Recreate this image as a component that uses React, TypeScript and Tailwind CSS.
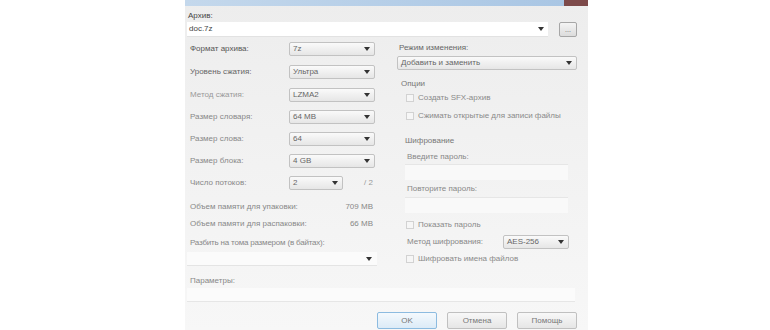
import React from 'react';

// ---------------------------------------------------------------------------
// Small building blocks
// ---------------------------------------------------------------------------

const font = "font-['Liberation_Sans',Arial,sans-serif]";

function Arrow() {
  return (
    <svg width="6" height="4" viewBox="0 0 6 4" className="shrink-0">
      <path d="M0 0h6L3 4z" fill="#333" />
    </svg>
  );
}

function Combo({ value, className = '' }: { value?: string; className?: string }) {
  return (
    <div
      className={`flex h-[14px] items-center justify-between rounded-[2px] border border-[#c2c2c2] bg-gradient-to-b from-[#fafafa] to-[#e6e6e6] pl-[3px] pr-[4px] ${className}`}
    >
      <span className="text-[8px] leading-none text-[#666]">{value}</span>
      <Arrow />
    </div>
  );
}

function Check({ label }: { label: string }) {
  return (
    <div className="flex h-[10px] items-center gap-[4px] pl-[9px]">
      <span className="h-[8px] w-[8px] border border-[#d2d2d2] bg-[#f6f6f6]" />
      <span className="text-[8px] leading-none text-[#8a8a8a]">{label}</span>
    </div>
  );
}

function Row({ label, children, tone = 'text-[#888]', mt }: { label: string; children: React.ReactNode; tone?: string; mt: string }) {
  return (
    <div className={`flex h-[14px] items-center ${mt}`}>
      <span className={`w-[102px] pl-[3px] text-[8px] leading-none ${tone}`}>{label}</span>
      {children}
    </div>
  );
}

// ---------------------------------------------------------------------------
// Dialog
// ---------------------------------------------------------------------------

export default function App() {
  return (
    <div className={`flex h-[330px] w-[770px] overflow-hidden bg-white ${font}`}>
      <div className="w-[185px] shrink-0" />

      <div className="flex w-[403px] shrink-0 flex-col bg-gradient-to-b from-[#ededed] via-[#f2f2f2] to-[#f7f7f7]">
        {/* Title bar remnant */}
        <div className="flex h-[6px]">
          <div className="flex-1 bg-gradient-to-r from-[#c4d8ec] to-[#a9c6e4]" />
          <div className="w-[24px] bg-[#7d4a4a]" />
        </div>

        {/* Archive name */}
        <div className="mt-[5px] h-[10px] pl-[3px] text-[8px] leading-[10px] text-[#444]">Архив:</div>
        <div className="mt-[1px] flex items-center pl-[2px]">
          <div className="flex h-[15px] w-[361px] items-center justify-between border-b border-[#e2e2e2] bg-white pl-[2px] pr-[4px]">
            <span className="text-[8px] leading-none text-[#444]">doc.7z</span>
            <Arrow />
          </div>
          <div className="ml-[11px] flex h-[15px] w-[18px] items-center justify-center rounded-[2px] border border-[#a6a6a6] bg-gradient-to-b from-[#f4f4f4] to-[#dcdcdc] text-[7px] leading-none text-[#666]">
            ...
          </div>
        </div>

        {/* Two columns */}
        <div className="mt-[5px] flex pl-[2px]">
          {/* Left column */}
          <div className="flex w-[190px] flex-col">
            <Row label="Формат архива:" tone="text-[#555]" mt="mt-0">
              <Combo value="7z" className="w-[86px]" />
            </Row>
            <Row label="Уровень сжатия:" tone="text-[#666]" mt="mt-[9px]">
              <Combo value="Ультра" className="w-[86px]" />
            </Row>
            <Row label="Метод сжатия:" tone="text-[#999]" mt="mt-[9px]">
              <Combo value="LZMA2" className="w-[86px]" />
            </Row>
            <Row label="Размер словаря:" mt="mt-[8px]">
              <Combo value="64 MB" className="w-[86px]" />
            </Row>
            <Row label="Размер слова:" mt="mt-[8px]">
              <Combo value="64" className="w-[86px]" />
            </Row>
            <Row label="Размер блока:" mt="mt-[8px]">
              <Combo value="4 GB" className="w-[86px]" />
            </Row>
            <Row label="Число потоков:" mt="mt-[8px]">
              <Combo value="2" className="w-[54px]" />
              <span className="ml-auto pr-[4px] text-[8px] leading-none text-[#999]">/ 2</span>
            </Row>

            <div className="mt-[12px] flex h-[10px] items-center justify-between pl-[3px] pr-[4px] text-[8px] leading-none text-[#888]">
              <span>Объем памяти для упаковки:</span>
              <span>709 MB</span>
            </div>
            <div className="mt-[7px] flex h-[10px] items-center justify-between pl-[3px] pr-[4px] text-[8px] leading-none text-[#888]">
              <span>Объем памяти для распаковки:</span>
              <span>66 MB</span>
            </div>
            <div className="mt-[9px] h-[10px] pl-[3px] text-[8px] leading-[10px] tracking-[-0.2px] text-[#888]">
              Разбить на тома размером (в байтах):
            </div>
            <div className="mt-[4px] flex h-[14px] w-[190px] items-center justify-end border-b border-[#e4e4e4] bg-[#fbfbfb] pr-[5px]">
              <Arrow />
            </div>
          </div>

          {/* Right column */}
          <div className="ml-[20px] flex w-[180px] flex-col">
            <div className="mt-[1px] h-[10px] pl-[2px] text-[8px] leading-[10px] text-[#666]">Режим изменения:</div>
            <Combo value="Добавить и заменить" className="mt-[3px] w-[180px]" />

            <div className="mt-[9px] h-[10px] pl-[4px] text-[8px] leading-[10px] text-[#777]">Опции</div>
            <div className="mt-[4px]">
              <Check label="Создать SFX-архив" />
            </div>
            <div className="mt-[8px]">
              <Check label="Сжимать открытые для записи файлы" />
            </div>

            <div className="mt-[15px] h-[10px] pl-[8px] text-[8px] leading-[10px] text-[#777]">Шифрование</div>
            <div className="mt-[6px] h-[10px] pl-[10px] text-[8px] leading-[10px] text-[#888]">Введите пароль:</div>
            <div className="ml-[8px] mt-[2px] h-[16px] w-[163px] border-t border-[#e6e6e6] bg-[#f9f9f9]" />
            <div className="mt-[4px] h-[10px] pl-[10px] text-[8px] leading-[10px] text-[#888]">Повторите пароль:</div>
            <div className="ml-[8px] mt-[3px] h-[16px] w-[163px] border-t border-[#e6e6e6] bg-[#f9f9f9]" />
            <div className="mt-[7px]">
              <Check label="Показать пароль" />
            </div>
            <div className="mt-[5px] flex h-[14px] items-center">
              <span className="w-[106px] pl-[10px] text-[8px] leading-none text-[#888]">Метод шифрования:</span>
              <Combo value="AES-256" className="w-[66px]" />
            </div>
            <div className="mt-[5px]">
              <Check label="Шифровать имена файлов" />
            </div>
          </div>
        </div>

        {/* Parameters */}
        <div className="mt-[10px] h-[10px] pl-[5px] text-[8px] leading-[10px] text-[#888]">Параметры:</div>
        <div className="ml-[2px] mt-[2px] h-[14px] w-[388px] border-b border-[#e6e6e6] bg-[#fbfbfb]" />

        {/* Buttons */}
        <div className="mt-[10px] flex justify-end gap-[10px] pr-[11px]">
          <div className="flex h-[17px] w-[60px] items-center justify-center rounded-[2px] border border-[#8cbbe0] bg-gradient-to-b from-[#f4f9fd] to-[#dcebf7] text-[8px] leading-none text-[#777]">
            OK
          </div>
          <div className="flex h-[17px] w-[60px] items-center justify-center rounded-[2px] border border-[#c0c0c0] bg-gradient-to-b from-[#f8f8f8] to-[#e6e6e6] text-[8px] leading-none text-[#777]">
            Отмена
          </div>
          <div className="flex h-[17px] w-[60px] items-center justify-center rounded-[2px] border border-[#c0c0c0] bg-gradient-to-b from-[#f8f8f8] to-[#e6e6e6] text-[8px] leading-none text-[#777]">
            Помощь
          </div>
        </div>
      </div>

      <div className="flex-1" />
    </div>
  );
}
